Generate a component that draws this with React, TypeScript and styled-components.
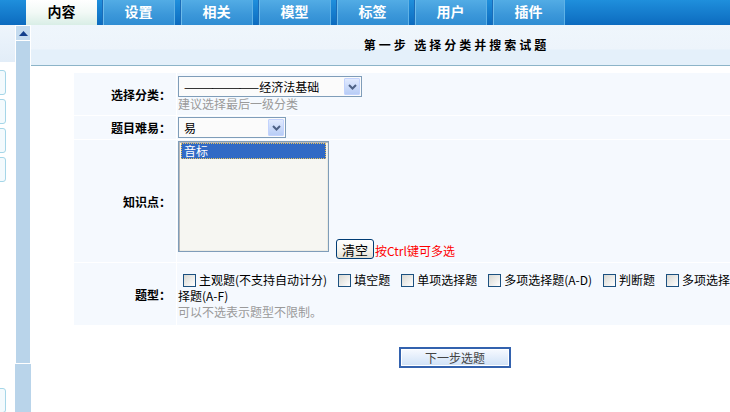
import React from 'react'
import styled, { createGlobalStyle } from 'styled-components'

const GlobalStyle = createGlobalStyle`
  html, body {
    margin: 0;
    padding: 0;
    overflow: hidden;
    background: #fff;
  }
  body {
    font-family: "Noto Sans CJK SC", "Noto Sans", sans-serif;
    font-size: 12px;
    color: #000;
  }
`

const tabs = ['内容', '设置', '相关', '模型', '标签', '用户', '插件']

const questionTypes = [
  '主观题(不支持自动计分)',
  '填空题',
  '单项选择题',
  '多项选择题(A-D)',
  '判断题',
  '多项选择题(A-E)',
  '多项选择题(A-F)',
]

const Chevron = () => (
  <svg width="9" height="6" viewBox="0 0 9 6">
    <path d="M1 1 L4.5 4.5 L8 1" fill="none" stroke="#4d6185" strokeWidth="2" />
  </svg>
)

const Select = ({ width, children }: { width: number; children: React.ReactNode }) => (
  <SelectBox $width={width}>
    <SelectText>{children}</SelectText>
    <SelectArrow>
      <Chevron />
    </SelectArrow>
  </SelectBox>
)

export default function App() {
  return (
    <Page>
      <GlobalStyle />
      <TopBar>
        {tabs.map((t, i) => (
          <Tab key={t} $active={i === 0}>
            {t}
          </Tab>
        ))}
      </TopBar>
      <Body>
        <Sidebar>
          <SideTop />
          <SideItem $top={8} />
          <SideItem />
          <SideItem />
          <SideItem />
          <SideItem $top={202} />
        </Sidebar>
        <Scrollbar>
          <ScrollButton>
            <svg width="9" height="5" viewBox="0 0 9 5">
              <path d="M0 5 L4.5 0 L9 5 Z" fill="#123f8c" />
            </svg>
          </ScrollButton>
          <ScrollThumb />
        </Scrollbar>
        <Main>
          <Header>
            <Title>第一步 选择分类并搜索试题</Title>
          </Header>
          <FormGrid>
            <Label>选择分类：</Label>
            <Cell $pt={3} $pb={4}>
              <Select width={184}>
                <Dashes>————————</Dashes>经济法基础
              </Select>
              <Hint>建议选择最后一级分类</Hint>
            </Cell>

            <Label>题目难易：</Label>
            <Cell $pt={1} $pb={1}>
              <Select width={108}>易</Select>
            </Cell>

            <Label>知识点：</Label>
            <KnowledgeCell>
              <ListBox>
                <Option>音标</Option>
              </ListBox>
              <ClearButton type="button">清空</ClearButton>
              <RedNote>按Ctrl键可多选</RedNote>
            </KnowledgeCell>

            <Label>题型：</Label>
            <Cell $pt={9} $pb={5}>
              <Types>
                {questionTypes.map(q => (
                  <React.Fragment key={q}>
                    <CheckBox />
                    <TypeLabel>{q}</TypeLabel>
                  </React.Fragment>
                ))}
              </Types>
              <Hint $lh={16}>可以不选表示题型不限制。</Hint>
            </Cell>
          </FormGrid>
          <NextButton type="button">下一步选题</NextButton>
        </Main>
      </Body>
    </Page>
  )
}

const Page = styled.div`
  width: 100vw;
  height: 100vh;
  overflow: hidden;
  display: flex;
  flex-direction: column;
`

const TopBar = styled.div`
  flex-shrink: 0;
  height: 25px;
  display: flex;
  column-gap: 5px;
  padding-left: 26px;
  background: linear-gradient(#1f8fdc, #0c6bbf);
`

const Tab = styled.div<{ $active?: boolean }>`
  box-sizing: border-box;
  flex-shrink: 0;
  width: ${p => (p.$active ? 71 : 73)}px;
  height: 25px;
  line-height: 22px;
  text-align: center;
  font-size: 14px;
  font-weight: 700;
  color: ${p => (p.$active ? '#000' : '#fff')};
  background: ${p =>
    p.$active
      ? 'linear-gradient(#ffffff, #f2f9f6 50%, #d9eee6)'
      : 'linear-gradient(#52ace5, #3b97d9 60%, #2f8dd3)'};
  border-left: ${p => (p.$active ? 'none' : '1px solid #1a6cb9')};
  border-right: ${p => (p.$active ? 'none' : '1px solid #5fb2e6')};
  box-shadow: ${p => (p.$active ? 'none' : 'inset 1px 0 0 #6dbbea')};
`

const Body = styled.div`
  flex: 1;
  display: flex;
  min-height: 0;
`

const Sidebar = styled.div`
  width: 15px;
  flex-shrink: 0;
  overflow: hidden;
  display: flex;
  flex-direction: column;
`

const SideTop = styled.div`
  height: 37px;
  flex-shrink: 0;
  background: linear-gradient(#eef5fc, #e2edf8);
`

const SideItem = styled.div<{ $top?: number }>`
  flex-shrink: 0;
  width: 13px;
  height: 23px;
  margin-left: -9px;
  margin-top: ${p => p.$top ?? 0}px;
  margin-bottom: 4px;
  border: 1px solid #a5d6e8;
  border-radius: 3px;
  background: #f3fafd;
`

const Scrollbar = styled.div`
  width: 16px;
  flex-shrink: 0;
  display: flex;
  flex-direction: column;
  background: #b9d4ea;
`

const ScrollButton = styled.div`
  box-sizing: border-box;
  height: 16px;
  border: 1px solid #fff;
  background: #c4dbef;
  display: flex;
  align-items: center;
  justify-content: center;
`

const ScrollThumb = styled.div`
  box-sizing: border-box;
  height: 323px;
  border: 1px solid #fff;
  border-top: none;
  background: #b9d4ea;
`

const Main = styled.div`
  width: 848px;
  flex-shrink: 0;
  display: flex;
  flex-direction: column;
`

const Header = styled.div`
  box-sizing: border-box;
  height: 41px;
  border-bottom: 1px solid #8cb4c8;
  background: linear-gradient(#eff6fc 0, #edf4fb 24px, #e4f0fa 25px, #e4f0fa 100%);
  padding-top: 12px;
`

const Title = styled.div`
  text-align: center;
  font-weight: 700;
  font-size: 12px;
  line-height: 16px;
  letter-spacing: 3px;
  padding-left: 3px;
`

const FormGrid = styled.div`
  display: grid;
  grid-template-columns: 102px 659px;
  gap: 1px;
  margin: 7px 0 0 43px;
`

const Label = styled.div`
  background: #f5f9fe;
  display: flex;
  align-items: center;
  justify-content: flex-end;
  padding-right: 5px;
  font-weight: 700;
  white-space: nowrap;
`

const Cell = styled.div<{ $pt: number; $pb: number }>`
  background: #f5f9fe;
  padding: ${p => p.$pt}px 0 ${p => p.$pb}px 1px;
`

const SelectBox = styled.div<{ $width: number }>`
  box-sizing: border-box;
  width: ${p => p.$width}px;
  height: 21px;
  display: flex;
  align-items: center;
  padding: 0 1px 0 5px;
  border: 1px solid #7f9db9;
  background: #fbfbfb;
`

const SelectText = styled.span`
  flex: 1;
  overflow: hidden;
  white-space: nowrap;
  line-height: 17px;
`

const Dashes = styled.span`
  letter-spacing: -2px;
  margin-right: 2px;
`

const SelectArrow = styled.span`
  box-sizing: border-box;
  width: 16px;
  height: 17px;
  display: flex;
  align-items: center;
  justify-content: center;
  border: 1px solid #c3d3fd;
  border-radius: 1px;
  background: linear-gradient(#e1eafe, #b8cdf6);
`

const Hint = styled.div<{ $lh?: number }>`
  color: #9a9a9a;
  line-height: ${p => p.$lh ?? 14}px;
`

const KnowledgeCell = styled.div`
  background: #f5f9fe;
  display: flex;
  align-items: flex-end;
  padding: 1px 0 0 1px;
`

const ListBox = styled.div`
  box-sizing: border-box;
  width: 151px;
  height: 111px;
  margin-bottom: 10px;
  padding: 1px 2px;
  border: 1px solid #7f9db9;
  background: #f6f6f2;
  box-shadow: inset 1px 1px 0 #b8b8b8, inset -1px -1px 0 #ebebe4;
`

const Option = styled.div`
  box-sizing: border-box;
  height: 16px;
  line-height: 14px;
  padding-left: 2px;
  color: #fff;
  background: #316ac5;
  border: 1px dotted #e7c45e;
`

const ClearButton = styled.button`
  box-sizing: border-box;
  width: 38px;
  height: 20px;
  margin: 0 0 3px 7px;
  padding: 0;
  font-family: inherit;
  font-size: 13px;
  line-height: 17px;
  color: #000;
  border: 1px solid #003c74;
  border-radius: 3px;
  background: linear-gradient(#ffffff, #f3f2ec 60%, #e3e0d2);
`

const RedNote = styled.span`
  margin: 0 0 4px 1px;
  line-height: 14px;
  color: #f00;
`

const Types = styled.div`
  line-height: 16px;
`

const CheckBox = styled.span`
  display: inline-block;
  box-sizing: border-box;
  width: 13px;
  height: 13px;
  margin: 0 3px 0 5px;
  vertical-align: -2px;
  border: 1px solid #1c5180;
  background: linear-gradient(135deg, #d8d8d2, #ffffff);
`

const TypeLabel = styled.span`
  margin-right: 6px;
`

const NextButton = styled.button`
  display: block;
  box-sizing: border-box;
  width: 112px;
  height: 21px;
  margin: 22px auto 0;
  padding: 0;
  font-family: inherit;
  font-size: 12px;
  color: #444;
  border: 2px solid #3362ae;
  box-shadow: inset 0 0 0 1px #fff;
  background: linear-gradient(#f7faff, #cfe1f7);
`
